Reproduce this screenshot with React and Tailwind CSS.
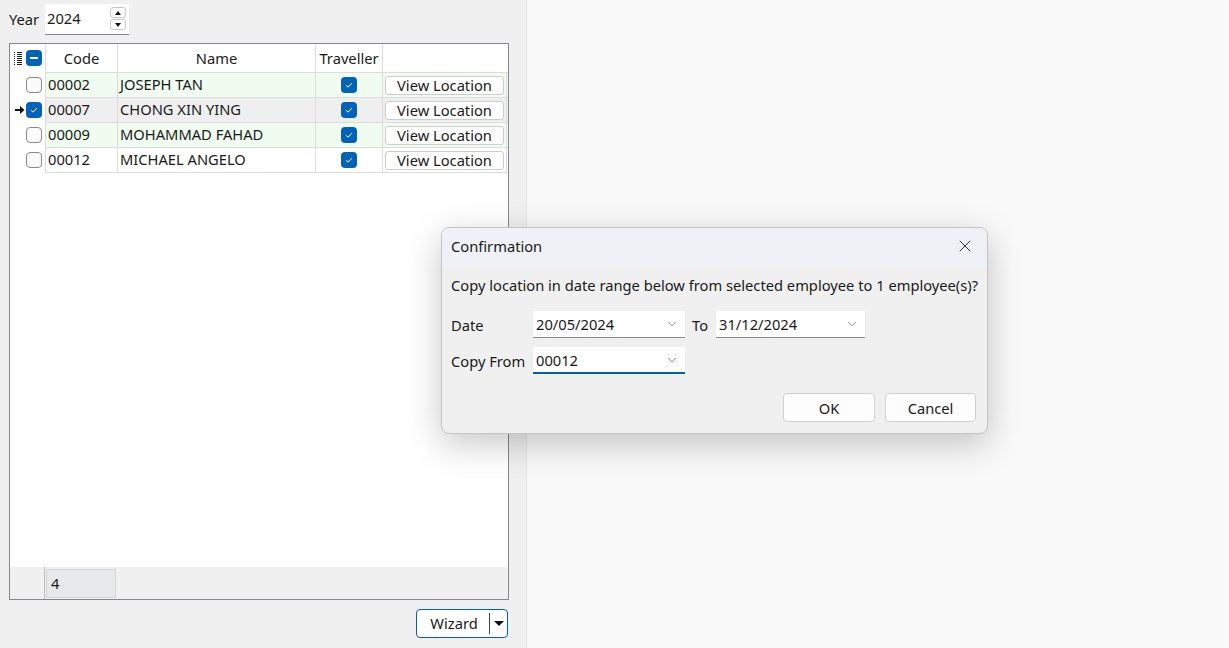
import React from 'react'
import { ChevronDown, X } from 'lucide-react'

const rows = [
  { code: '00002', name: 'JOSEPH TAN', checked: false, bg: 'bg-[#effcef]' },
  { code: '00007', name: 'CHONG XIN YING', checked: true, bg: 'bg-[#efefef]', current: true },
  { code: '00009', name: 'MOHAMMAD FAHAD', checked: false, bg: 'bg-[#effcef]' },
  { code: '00012', name: 'MICHAEL ANGELO', checked: false, bg: 'bg-white' },
]

const CheckIcon = () => (
  <svg width="10" height="10" viewBox="0 0 10 10" fill="none">
    <path d="M2 5.2 L4.1 7.2 L8 3" stroke="white" strokeWidth="1" />
  </svg>
)

const Box = ({ checked, minus }) => {
  if (checked || minus) {
    return (
      <div className="w-[16px] h-[16px] rounded-[4px] bg-[#0063b8] flex items-center justify-center">
        {minus ? <div className="w-[8px] h-[1.5px] bg-white" /> : <CheckIcon />}
      </div>
    )
  }
  return <div className="w-[16px] h-[16px] rounded-[4px] border border-[#8a8a8a] bg-[#fbfbfb]" />
}

const ListIcon = () => (
  <svg width="8" height="13" viewBox="0 0 8 13" shapeRendering="crispEdges">
    {[0, 2, 4, 6, 8, 10, 12].map((y) => (
      <g key={y}>
        <rect x="0" y={y} width="1" height="1" fill="#222" />
        <rect x="3" y={y} width="5" height="1" fill="#222" />
      </g>
    ))}
  </svg>
)

const Arrow = () => (
  <svg width="10" height="10" viewBox="0 0 10 10">
    <path d="M0 4 H5 V1 L9.5 5 L5 9 V6 H0 Z" fill="#111" />
  </svg>
)

const Combo = ({ value, w, focused }) => (
  <div
    className={`h-[27px] ${w} bg-white flex items-center justify-between pl-[3px] pr-[6px] border-b ${
      focused ? 'border-b-2 border-[#005fb8]' : 'border-[#8a8a8a]'
    }`}
  >
    <span>{value}</span>
    <ChevronDown size={14} strokeWidth={1.2} className="text-[#555]" />
  </div>
)

export default function App() {
  return (
    <div
      className="w-[1229px] h-[648px] flex bg-[#f9f9f9] text-[14.7px] text-[#1a1a1a] relative overflow-hidden"
      style={{ fontFamily: '"Noto Sans", "Open Sans", sans-serif' }}
    >
      {/* left panel */}
      <div className="w-[527px] h-full bg-[#f0f0f0] border-r border-[#e4e4e4] flex flex-col">
        <div className="flex items-center h-[36px] pt-[2px]">
          <span className="ml-[9px] w-[36px]">Year</span>
          <div className="w-[84px] h-[31px] bg-white border-b border-[#8a8a8a] flex items-center justify-between pl-[2px] pr-[3px]">
            <span>2024</span>
            <div className="flex flex-col gap-[1px]">
              <div className="w-[16px] h-[11px] border border-[#c8c8c8] rounded-[3px] flex items-center justify-center">
                <div className="w-0 h-0 border-l-[3.5px] border-r-[3.5px] border-b-[4px] border-l-transparent border-r-transparent border-b-[#111]" />
              </div>
              <div className="w-[16px] h-[11px] border border-[#c8c8c8] rounded-[3px] flex items-center justify-center">
                <div className="w-0 h-0 border-l-[3.5px] border-r-[3.5px] border-t-[4px] border-l-transparent border-r-transparent border-t-[#111]" />
              </div>
            </div>
          </div>
        </div>

        {/* grid */}
        <div className="ml-[9px] mt-[7px] w-[500px] h-[557px] border border-[#828790] bg-white flex flex-col">
          <div className="flex h-[28px] shrink-0">
            <div className="w-[35px] flex items-center pl-[4px] gap-[4px]">
              <ListIcon />
              <Box minus />
            </div>
            <div className="w-[72px] border-l border-[#dcdcdc] flex items-center justify-center">Code</div>
            <div className="w-[198px] border-l border-[#dcdcdc] flex items-center justify-center">Name</div>
            <div className="w-[67px] border-l border-[#dcdcdc] flex items-center justify-center">Traveller</div>
            <div className="w-[126px] border-l border-[#dcdcdc]" />
          </div>
          {rows.map((r) => (
            <div key={r.code} className="flex h-[25px] shrink-0">
              <div className="w-[35px] flex items-center justify-end pr-[3px] gap-[1px]">
                {r.current && <Arrow />}
                <Box checked={r.checked} />
              </div>
              <div className={`flex flex-1 border-t border-b border-[#dcdcdc] -mb-[1px] ${r.bg}`}>
                <div className="w-[72px] border-l border-[#dcdcdc] flex items-center pl-[2px] pb-[1px]">{r.code}</div>
                <div className="w-[198px] border-l border-[#dcdcdc] flex items-center pl-[2px] pb-[1px]">{r.name}</div>
                <div className="w-[67px] border-l border-[#dcdcdc] flex items-center justify-center">
                  <Box checked />
                </div>
                <div className="w-[125px] border-l border-r border-[#dcdcdc] flex items-center px-[2px]">
                  <div className="w-full h-[19px] bg-white border border-[#cccccc] rounded-[3px] flex items-center justify-center">
                    View Location
                  </div>
                </div>
              </div>
            </div>
          ))}
          <div className="flex-1" />
          <div className="h-[32px] bg-[#f0f0f0] flex shrink-0">
            <div className="w-[35px] border-r border-[#bcbcbc]" />
            <div className="w-[70px] mt-[2px] mb-[1px] ml-[1px] bg-[#e6e9ea] border border-[#d4d4d4] flex items-center pl-[4px]">4</div>
          </div>
        </div>

        <div className="flex justify-end mt-[9px] pr-[18px]">
          <div className="w-[92px] h-[29px] bg-white border border-[#005fb8] rounded-[4px] flex items-center">
            <span className="flex-1 text-center pl-[2px]">Wizard</span>
            <div className="w-[1px] h-[21px] bg-[#444]" />
            <div className="w-[17px] flex items-center justify-center">
              <div className="w-0 h-0 border-l-[5px] border-r-[5px] border-t-[5px] border-l-transparent border-r-transparent border-t-[#111]" />
            </div>
          </div>
        </div>
      </div>

      {/* dialog */}
      <div className="absolute left-[441px] top-[227px] w-[547px] h-[207px] rounded-[8px] border border-[#c4c4c4] bg-[#f0f0f0] shadow-[0_10px_35px_rgba(0,0,0,0.22)] overflow-hidden flex flex-col">
        <div className="h-[38px] shrink-0 bg-[#eef2f7] flex items-center justify-between pl-[9px] pr-[12px] pb-[2px]">
          <span>Confirmation</span>
          <X size={20} strokeWidth={1.1} className="text-[#222]" />
        </div>
        <div className="pl-[9px] pt-[8px] flex flex-col">
          <div className="whitespace-nowrap">Copy location in date range below from selected employee to 1 employee(s)?</div>
          <div className="flex items-center mt-[15px]">
            <span className="w-[82px]">Date</span>
            <Combo value="20/05/2024" w="w-[152px]" />
            <span className="ml-[7px] w-[24px]">To</span>
            <Combo value="31/12/2024" w="w-[149px]" />
          </div>
          <div className="flex items-center mt-[9px]">
            <span className="w-[82px]">Copy From</span>
            <Combo value="00012" w="w-[152px]" focused />
          </div>
          <div className="flex justify-end gap-[10px] pr-[11px] mt-[19px]">
            <div className="w-[92px] h-[29px] bg-[#fdfdfd] border border-[#d0d0d0] rounded-[4px] flex items-center justify-center">OK</div>
            <div className="w-[91px] h-[29px] bg-[#fdfdfd] border border-[#d0d0d0] rounded-[4px] flex items-center justify-center">Cancel</div>
          </div>
        </div>
      </div>
    </div>
  )
}
